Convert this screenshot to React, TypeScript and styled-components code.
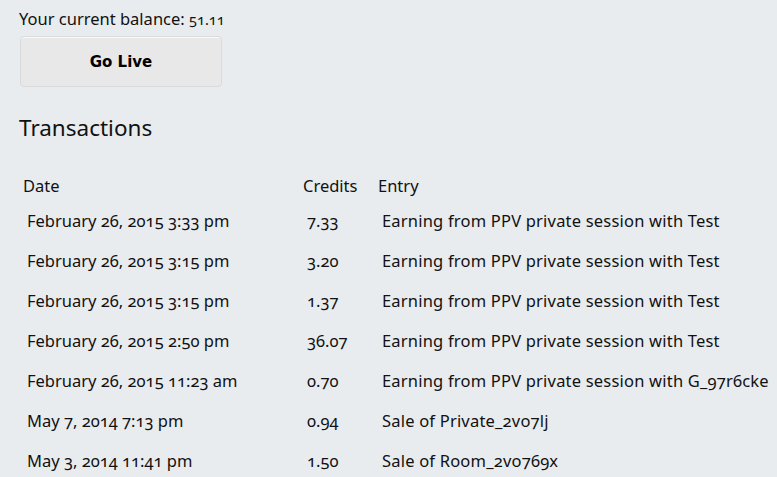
import React from "react";
import styled, { createGlobalStyle } from "styled-components";

const Global = createGlobalStyle`
  html, body {
    margin: 0;
    padding: 0;
    background: #e9ecef;
    overflow: hidden;
  }
  body {
    font-family: "Noto Sans", "Open Sans", sans-serif;
    color: #111;
    font-variant-numeric: oldstyle-nums;
  }
`;

const Page = styled.div`
  padding: 8px 19px 0 19px;
  width: 900px;
`;

const Balance = styled.div`
  font-size: 16.5px;
  line-height: 22px;
`;

const Amount = styled.span`
  font-size: 14.5px;
`;

const LiveButton = styled.button`
  display: block;
  margin: 6px 0 0 1px;
  width: 202px;
  height: 51px;
  background: #e8e8e8;
  border: 1px solid #dadada;
  border-radius: 4px;
  box-shadow: inset 0 1px 0 #fafafa;
  font-family: "DejaVu Sans", "Noto Sans", sans-serif;
  font-weight: 700;
  font-size: 15px;
  color: #000;
  cursor: pointer;
`;

const Heading = styled.h2`
  margin: 26px 0 0 0;
  font-size: 22.5px;
  font-weight: 400;
  line-height: 30px;
`;

const Table = styled.table`
  margin-top: 28px;
  border-collapse: collapse;
  table-layout: fixed;
  white-space: nowrap;
  font-size: 16.5px;
`;

const Th = styled.th<{ $w?: number }>`
  box-sizing: border-box;
  text-align: left;
  font-weight: 400;
  padding: 5px 4px;
  line-height: 20px;
  ${(p) => (p.$w ? `width: ${p.$w}px;` : "")}
`;

const Td = styled.td<{ $wide?: boolean }>`
  padding: 10px 8px;
  line-height: 20px;
  ${(p) => (p.$wide ? "letter-spacing: 0.2px;" : "")}
`;

const rows = [
  ["February 26, 2015 3:33 pm", "7.33", "Earning from PPV private session with Test"],
  ["February 26, 2015 3:15 pm", "3.20", "Earning from PPV private session with Test"],
  ["February 26, 2015 3:15 pm", "1.37", "Earning from PPV private session with Test"],
  ["February 26, 2015 2:50 pm", "36.07", "Earning from PPV private session with Test"],
  ["February 26, 2015 11:23 am", "0.70", "Earning from PPV private session with G_97r6cke"],
  ["May 7, 2014 7:13 pm", "0.94", "Sale of Private_2vo7lj"],
  ["May 3, 2014 11:41 pm", "1.50", "Sale of Room_2vo769x"],
];

export default function App() {
  return (
    <Page>
      <Global />
      <Balance>
        Your current balance: <Amount>51.11</Amount>
      </Balance>
      <LiveButton>Go Live</LiveButton>
      <Heading>Transactions</Heading>
      <Table>
        <thead>
          <tr>
            <Th $w={280}>Date</Th>
            <Th $w={75}>Credits</Th>
            <Th $w={500}>Entry</Th>
          </tr>
        </thead>
        <tbody>
          {rows.map((r, i) => (
            <tr key={i}>
              <Td>{r[0]}</Td>
              <Td>{r[1]}</Td>
              <Td $wide>{r[2]}</Td>
            </tr>
          ))}
        </tbody>
      </Table>
    </Page>
  );
}
